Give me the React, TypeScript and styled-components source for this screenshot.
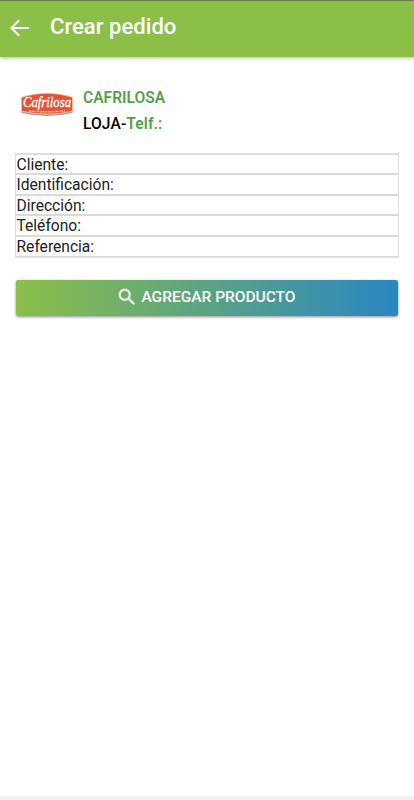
import React from "react";
import styled, { createGlobalStyle } from "styled-components";

const GlobalStyle = createGlobalStyle`
  * { box-sizing: border-box; }
  body { margin: 0; background: #fff; font-family: Roboto, "Liberation Sans", sans-serif; color: #000; }
`;

const Screen = styled.div`
  display: flex;
  flex-direction: column;
  height: 800px;
  border-bottom: 4px solid #f1f1f1;
  background: #fff;
`;

const Toolbar = styled.header`
  display: flex;
  align-items: center;
  height: 57px;
  flex: none;
  padding: 0 7px 2px;
  gap: 19px;
  background: #8bbf47;
  border-top: 1px solid #627e42;
  box-shadow: 0 1px 4px rgba(0, 0, 0, 0.3);
`;

const BackIcon = styled.svg`
  width: 24px;
  height: 24px;
  fill: #fff;
`;

const Title = styled.h1`
  margin: 0;
  padding-bottom: 5px;
  color: #fff;
  font-size: 22.1px;
  line-height: 28px;
  font-weight: 500;
`;

const Content = styled.main`
  display: flex;
  flex-direction: column;
  padding: 27px 15px 0;
`;

const Company = styled.section`
  display: flex;
  height: 69px;
`;

const Logo = styled.svg`
  width: 54px;
  height: 27px;
  margin: 7px 9px 0 5px;
  flex: none;
  overflow: visible;
`;

const CompanyText = styled.div`
  font-size: 15.6px;
  font-weight: 500;
  line-height: 26px;
  padding-top: 1px;
`;

const Green = styled.span`
  color: #55a14b;
  font-weight: 600;
`;

const SecondLine = styled.div`
  letter-spacing: 0.1px;
`;

const Fields = styled.div`
  display: flex;
  flex-direction: column;
  width: 384px;
  border: 1px solid #dedede;
  border-top-width: 2px;
`;

const Field = styled.div`
  height: 20.4px;
  padding-left: 0.5px;
  border-bottom: 2px solid #d9d9d9;
  font-size: 15.6px;
  line-height: 20px;
  font-weight: 400;
  color: #222;

  &:last-child { border-bottom-width: 1px; }
`;

const AddButton = styled.button`
  display: flex;
  align-items: center;
  justify-content: center;
  gap: 3px;
  width: 382px;
  height: 36px;
  margin: 22px 0 0 1px;
  padding: 0 2px 1px 0;
  border: 0;
  border-radius: 2px;
  background: linear-gradient(90deg, #8bbf47, #2a87c3);
  box-shadow: 0 1px 3px rgba(0, 0, 0, 0.45);
  color: #fff;
  font: 500 15.5px/20px Roboto, sans-serif;
`;

const SearchIcon = styled.svg`
  width: 22px;
  height: 22px;
  fill: #fff;
  stroke: #fff;
  stroke-width: 0.3;
`;

const labels = ["Cliente:", "Identificación:", "Dirección:", "Teléfono:", "Referencia:"];

export default function App() {
  return (
    <Screen>
      <GlobalStyle />
      <Toolbar>
        <BackIcon viewBox="0 0 24 24">
          <path d="M22 11H6.8l6.1-6.1L11.5 3.5 3 12l8.5 8.5 1.4-1.4L6.8 13H22z" />
        </BackIcon>
        <Title>Crear pedido</Title>
      </Toolbar>
      <Content>
        <Company>
          <Logo viewBox="0 0 54 27">
            <path d="M1.5 18V22Q27 28 52.500 22V18Z" fill="#a8a29c" />
            <path d="M1 6Q27-2 53 6V20.500Q27 26.500 1 20.500Z" fill="#f3b795" />
            <path d="M2 6.700Q27-1 52 6.700V19.700Q27 25.500 2 19.700Z" fill="#e5523a" />
            <text x="3" y="16" textLength="48" lengthAdjust="spacingAndGlyphs" fill="#fff" stroke="#fff" strokeWidth=".3" fontFamily="Liberation Serif, serif" fontStyle="italic" fontWeight="400" fontSize="14">Cafrilosa</text>
            <path d="M9 20Q27 21.500 45 20" fill="none" stroke="#f6c28a" strokeWidth="1.500" strokeDasharray="2 .7" />
          </Logo>
          <CompanyText>
            <div><Green>CAFRILOSA</Green></div>
            <SecondLine>LOJA-<Green>Telf.:</Green></SecondLine>
          </CompanyText>
        </Company>
        <Fields>
          {labels.map((label) => <Field key={label}>{label}</Field>)}
        </Fields>
        <AddButton>
          <SearchIcon viewBox="0 0 24 24">
            <path d="M15.500 14h-.790l-.280-.270A6.470 6.470 0 0 0 16 9.500 6.500 6.500 0 1 0 9.500 16c1.610 0 3.090-.590 4.230-1.570l.270.280v.790l5 4.990L20.490 19zm-6 0A4.500 4.500 0 1 1 9.500 5a4.500 4.500 0 0 1 0 9z" />
          </SearchIcon>
          AGREGAR PRODUCTO
        </AddButton>
      </Content>
    </Screen>
  );
}
